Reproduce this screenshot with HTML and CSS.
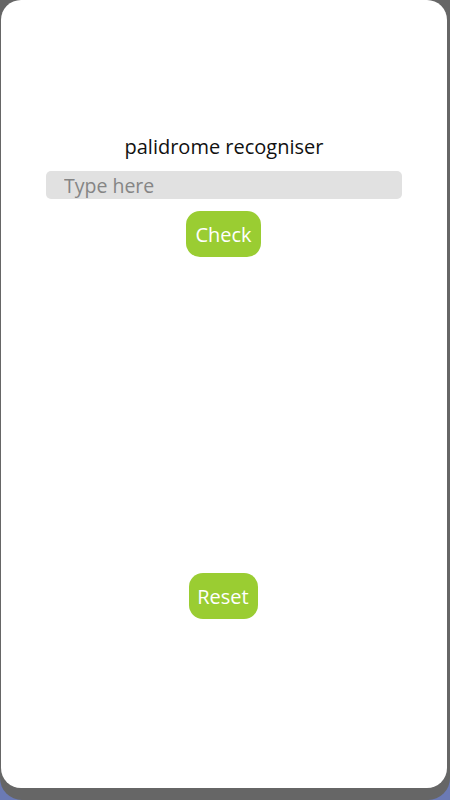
FILE: index.html
```html
<!DOCTYPE html>
<html>
<head>
<meta charset="utf-8">
<link rel="stylesheet" href="styles.css">
</head>
<body>
<div class="frame">
  <div class="card">
    <h1 class="title">palidrome recogniser</h1>
    <input class="field" type="text" placeholder="Type here">
    <button class="btn check">Check</button>
    <button class="btn reset">Reset</button>
  </div>
</div>
</body>
</html>
```
FILE: styles.css
```css
html, body {
  margin: 0;
  padding: 0;
  background: #6b7ab5;
  height: 800px;
  overflow: hidden;
}
.frame {
  background: #666666;
  height: 800px;
  border-radius: 0 0 22px 22px;
  padding: 0 3px 0 1px;
  box-sizing: border-box;
}
.card {
  background: #ffffff;
  height: 788px;
  border-radius: 20px;
  display: flex;
  flex-direction: column;
  align-items: center;
  font-family: "Open Sans", "Noto Sans", sans-serif;
}
.title {
  margin: 134px 0 0 0;
  font-size: 20px;
  font-weight: 400;
  line-height: 26px;
  color: #111;
}
.field {
  margin-top: 11px;
  width: 356px;
  height: 28px;
  box-sizing: border-box;
  border: none;
  border-radius: 5px;
  background: #e1e1e1;
  padding: 0 0 0 18px;
  font-family: "Open Sans", "Noto Sans", sans-serif;
  font-size: 19.5px;
  color: #333;
  outline: none;
}
.field::placeholder {
  color: #858585;
}
.btn {
  border: none;
  background: #9acd32;
  color: #ffffff;
  font-family: "Open Sans", "Noto Sans", sans-serif;
  font-size: 20px;
  height: 46px;
  border-radius: 14px;
  padding: 0;
}
.check {
  margin-top: 12px;
  width: 75px;
  margin-left: -1px;
}
.reset {
  margin-top: 316px;
  width: 69px;
  margin-left: -2px;
}
```
